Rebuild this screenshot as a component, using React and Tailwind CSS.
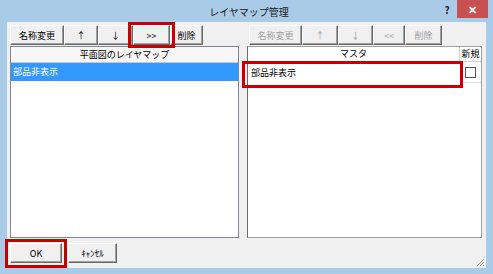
import React from 'react';

/**
 * レイヤマップ管理 ダイアログ
 */

const Btn = ({ w, label, disabled, className = '' }) => (
  <div
    className={`h-[20px] shrink-0 flex items-center justify-center bg-[#f0f0f0] border border-t-white border-l-white border-r-[#6a6a6a] border-b-[#6a6a6a] shadow-[inset_-1px_-1px_0_#a0a0a0] text-[9px] leading-none ${disabled ? 'text-[#a0a0a0]' : 'text-black'} ${className}`}
    style={{ width: w }}
  >
    {label}
  </div>
);

const RedMark = ({ className }) => (
  <div className={`absolute border-[3px] border-[#c40000] pointer-events-none ${className}`} />
);

const App = () => {
  return (
    <div className="w-[493px] h-[274px] bg-[#aacbe8] flex flex-col font-['Noto_Sans_CJK_JP','Noto_Sans',sans-serif] text-black overflow-hidden">
      {/* タイトルバー */}
      <div className="h-[22px] flex items-start shrink-0">
        <div className="flex-1 h-[22px] flex items-center justify-center pl-[58px] text-[10px] text-[#1a1a1a]">
          レイヤマップ管理
        </div>
        <div className="w-[14px] h-[18px] flex items-center justify-center text-[10px] font-bold text-[#222]">?</div>
        <div className="w-[31px] h-[18px] ml-[3px] mr-[5px] bg-[#c75050] flex items-center justify-center text-white text-[11px] font-bold">
          ✕
        </div>
      </div>

      {/* 本体 */}
      <div className="mx-[7px] h-[246px] bg-[#f0f0f0] flex flex-col px-[3px] pr-[4px] relative">
        <div className="flex gap-[8px] pt-[3px]">
          {/* 左パネル */}
          <div className="w-[230px] flex flex-col">
            <div className="flex">
              <Btn w={54} label="名称変更" />
              <Btn w={34} label="↑" />
              <Btn w={35} label="↓" />
              <div className="relative">
                <Btn w={37} label=">>" />
                <RedMark className="-left-[5px] -right-[5px] -top-[3px] -bottom-[3px]" />
              </div>
              <Btn w={33} label="削除" />
            </div>
            <div className="mt-[1px] h-[192px] border border-[#828790] bg-white flex flex-col">
              <div className="h-[16px] flex items-center justify-center border-b border-[#c8c8c8] bg-[#f7f7f7] text-[9px]">
                平面図のレイヤマップ
              </div>
              <div className="h-[18px] bg-[#3399ff] text-white text-[9px] flex items-center pl-[2px]">
                部品非表示
              </div>
            </div>
          </div>

          {/* 右パネル */}
          <div className="w-[236px] flex flex-col">
            <div className="flex ml-[2px]">
              <Btn w={53} label="名称変更" disabled />
              <Btn w={36} label="↑" disabled />
              <Btn w={35} label="↓" disabled />
              <Btn w={32} label="<<" disabled />
              <Btn w={37} label="削除" disabled />
            </div>
            <div className="mt-[1px] h-[192px] border border-[#a0a0a0] border-l-[#6a6a6a] bg-white flex flex-col">
              <div className="h-[15px] flex border-b border-[#d0d0d0] text-[9px]">
                <div className="flex-1 flex items-center justify-center border-r border-[#d0d0d0]">マスタ</div>
                <div className="w-[21px] flex items-center justify-center">新規</div>
              </div>
              <div className="h-[21px] flex">
                <div className="flex-1 relative flex items-center pl-[3px] text-[9px]">
                  部品非表示
                  <RedMark className="-left-[6px] -right-[3px] -top-[1px] -bottom-[5px]" />
                </div>
                <div className="w-[21px] flex items-center justify-center border-b border-[#e0e0e0]">
                  <div className="w-[11px] h-[11px] border border-[#555] bg-white" />
                </div>
              </div>
            </div>
          </div>
        </div>

        {/* 下部ボタン */}
        <div className="flex gap-[6px] mt-[5px]">
          <div className="relative">
            <Btn w={52} label="OK" />
            <RedMark className="-left-[5px] -right-[5px] -top-[4px] -bottom-[5px]" />
          </div>
          <Btn w={49} label="ｷｬﾝｾﾙ" />
        </div>

        {/* サイズ変更グリップ */}
        <svg className="absolute right-[1px] bottom-[1px]" width="9" height="9" viewBox="0 0 9 9">
          <path d="M8 1 L1 8 M8 4 L4 8 M8 7 L7 8" stroke="#9a9a9a" strokeWidth="1" />
        </svg>
      </div>
    </div>
  );
};

export default App;
